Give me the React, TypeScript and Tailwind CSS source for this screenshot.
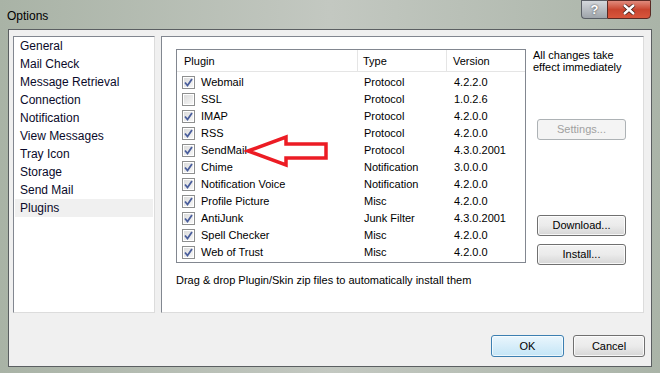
const NAV = [
  'General',
  'Mail Check',
  'Message Retrieval',
  'Connection',
  'Notification',
  'View Messages',
  'Tray Icon',
  'Storage',
  'Send Mail',
  'Plugins',
];

const PLUGINS = [
  { name: 'Webmail', type: 'Protocol', version: '4.2.2.0', on: true },
  { name: 'SSL', type: 'Protocol', version: '1.0.2.6', on: false },
  { name: 'IMAP', type: 'Protocol', version: '4.2.0.0', on: true },
  { name: 'RSS', type: 'Protocol', version: '4.2.0.0', on: true },
  { name: 'SendMail', type: 'Protocol', version: '4.3.0.2001', on: true },
  { name: 'Chime', type: 'Notification', version: '3.0.0.0', on: true },
  { name: 'Notification Voice', type: 'Notification', version: '4.2.0.0', on: true },
  { name: 'Profile Picture', type: 'Misc', version: '4.2.0.0', on: true },
  { name: 'AntiJunk', type: 'Junk Filter', version: '4.3.0.2001', on: true },
  { name: 'Spell Checker', type: 'Misc', version: '4.2.0.0', on: true },
  { name: 'Web of Trust', type: 'Misc', version: '4.2.0.0', on: true },
];

function Checkbox({ checked }: { checked: boolean }) {
  return (
    <div className="w-[13px] h-[13px] border border-[#8e8f8f] bg-white p-[1px] shrink-0">
      <div className="w-full h-full bg-gradient-to-br from-[#dcdcdc] to-[#f6f6f6] flex items-center justify-center">
        {checked && (
          <svg width="9" height="9" viewBox="0 0 9 9">
            <path d="M1 4.5 L3.5 7.5 L8 1" fill="none" stroke="#4a5e9c" strokeWidth={1.8} />
          </svg>
        )}
      </div>
    </div>
  );
}

function Button({ label, disabled, primary }: { label: string; disabled?: boolean; primary?: boolean }) {
  return (
    <div
      className={`w-full h-full flex items-center justify-center rounded-[3px] border text-[11px] ${
        disabled
          ? 'border-[#adb2b5] bg-[#f4f4f4] text-[#a0a0a0]'
          : primary
            ? 'border-[#3c7fb1] bg-gradient-to-b from-[#eaf6fd] to-[#c4e5f6] text-black shadow-[inset_0_0_0_1px_#ffffffaa]'
            : 'border-[#707070] bg-gradient-to-b from-[#f2f2f2] via-[#ebebeb] to-[#d6d6d6] text-black shadow-[inset_0_0_0_1px_#ffffffcc]'
      }`}
    >
      {label}
    </div>
  );
}

export default function App() {
  return (
    <div
      className="relative w-[660px] h-[373px] flex flex-col bg-gradient-to-r from-[#a9b3a6] via-[#c3c8c1] to-[#aab4a8] overflow-hidden"
      style={{ fontFamily: '"Liberation Sans", Arial, sans-serif' }}
    >
      {/* title bar */}
      <div className="h-[29px] flex items-start shrink-0">
        <div className="pl-[7px] pt-[7px] text-[12px] text-black">Options</div>
        <div className="ml-auto mr-[9px] flex">
          <div className="w-[26px] h-[19px] border border-[#5a5f66] border-r-0 rounded-bl-[4px] bg-gradient-to-b from-[#d4d8dc] to-[#9ea4aa] flex items-center justify-center text-white text-[13px] font-bold [text-shadow:0_0_2px_#333]">
            ?
          </div>
          <div className="w-[44px] h-[19px] border border-[#5a2a24] rounded-br-[4px] bg-gradient-to-b from-[#e08a7c] via-[#c9452f] to-[#d8563c] flex items-center justify-center">
            <svg width="14" height="11" viewBox="0 0 14 11">
              <path d="M2 1 L12 10 M12 1 L2 10" stroke="#3a1a14" strokeWidth={4} />
              <path d="M2 1 L12 10 M12 1 L2 10" stroke="#fff" strokeWidth={2.4} />
            </svg>
          </div>
        </div>
      </div>

      {/* client area */}
      <div className="mx-[8px] mb-[6px] flex-1 border border-[#5b5f62] bg-[#f0f0f0] flex flex-col">
        <div className="flex gap-[6px] pl-[4px] pr-[7px] pt-[6px]">
          {/* nav list */}
          <div className="w-[144px] h-[277px] bg-white border border-[#828790] border-r-[#dcdcdc] border-b-[#dcdcdc] text-[12px] text-[#0a0a2a]">
            {NAV.map(n => (
              <div
                key={n}
                className={`h-[18px] leading-[18px] pl-[5px] mx-[1px] ${n === 'Plugins' ? 'bg-[#f0f0f0]' : ''}`}
              >
                {n}
              </div>
            ))}
          </div>

          {/* plugins panel */}
          <div className="flex-1 h-[277px] bg-white border border-[#828790] border-r-[#dcdcdc] border-b-[#dcdcdc] flex pl-[14px] pt-[12px] pr-[17px]">
            <div className="flex flex-col">
              <div className="w-[350px] h-[214px] border border-[#828790] text-[11px] text-black">
                <div className="flex h-[22px] border-b border-[#e5e5e5]">
                  <div className="w-[181px] pl-[7px] leading-[22px] border-r border-[#e5e5e5]">Plugin</div>
                  <div className="w-[89px] pl-[5px] leading-[22px] border-r border-[#e5e5e5]">Type</div>
                  <div className="flex-1 pl-[6px] leading-[22px]">Version</div>
                </div>
                <div className="pt-[2px]">
                  {PLUGINS.map(p => (
                    <div key={p.name} className="flex items-center h-[17px]">
                      <div className="w-[181px] flex items-center pl-[5px] gap-[6px]">
                        <Checkbox checked={p.on} />
                        <span>{p.name}</span>
                      </div>
                      <div className="w-[89px] pl-[6px]">{p.type}</div>
                      <div className="flex-1 pl-[7px]">{p.version}</div>
                    </div>
                  ))}
                </div>
              </div>
              <div className="mt-[9px] text-[11px] text-black">Drag &amp; drop Plugin/Skin zip files to automatically install them</div>
            </div>

            <div className="ml-[7px] flex flex-col text-[11px] text-black w-[93px]">
              <div className="leading-[12px]">
                All changes take
                <br />
                effect immediately
              </div>
              <div className="mt-[46px] ml-[4px] w-[89px] h-[21px]">
                <Button label="Settings..." disabled />
              </div>
              <div className="mt-[75px] ml-[4px] w-[89px] h-[21px]">
                <Button label="Download..." />
              </div>
              <div className="mt-[8px] ml-[4px] w-[89px] h-[21px]">
                <Button label="Install..." />
              </div>
            </div>
          </div>
        </div>

        <div className="flex justify-end gap-[9px] pr-[6px] mt-[22px]">
          <div className="w-[73px] h-[22px]">
            <Button label="OK" primary />
          </div>
          <div className="w-[72px] h-[22px]">
            <Button label="Cancel" />
          </div>
        </div>
      </div>

      {/* annotation arrow */}
      <svg className="absolute left-0 top-0 pointer-events-none" width="660" height="373">
        <path
          d="M248 151 L286 137 L286 144 L326 144 L326 158 L286 158 L286 165 Z"
          fill="none"
          stroke="#ec1c24"
          strokeWidth={3.5}
          strokeLinejoin="miter"
        />
      </svg>
    </div>
  );
}
